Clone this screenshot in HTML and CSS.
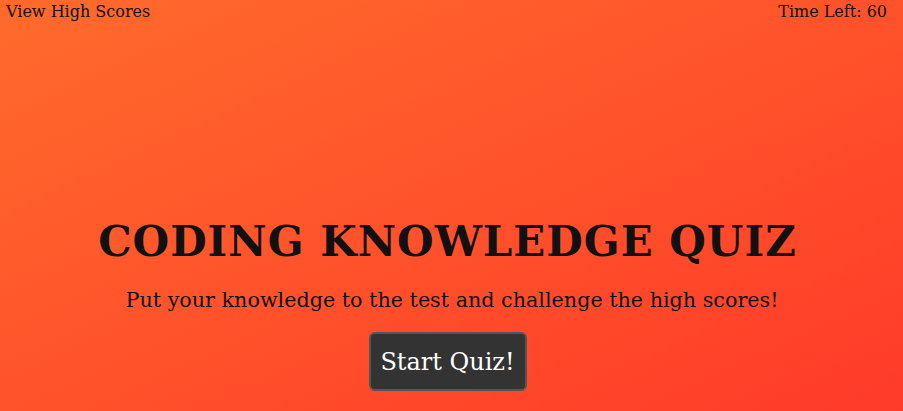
FILE: index.html
```html
<!DOCTYPE html>
<html>
<head>
<meta charset="utf-8">
<link rel="stylesheet" href="styles.css">
</head>
<body>
<header class="top-bar">
  <a class="high-scores">View High Scores</a>
  <span class="timer">Time Left: 60</span>
</header>
<main class="intro">
  <h1 class="title">CODING KNOWLEDGE QUIZ</h1>
  <p class="subtitle">Put your knowledge to the test and challenge the high scores!</p>
  <button class="start-btn">Start Quiz!</button>
</main>
</body>
</html>
```
FILE: styles.css
```css
html, body {
  margin: 0;
  height: 100%;
}
body {
  background: linear-gradient(to bottom right, #ff6b2c, #ff3a29);
  font-family: "DejaVu Serif", serif;
  color: #111;
}
.top-bar {
  display: flex;
  justify-content: space-between;
  padding: 2px 16px 0 6px;
  font-size: 16px;
  line-height: 20px;
}
.intro {
  display: flex;
  flex-direction: column;
  align-items: center;
  padding: 190px 8px 0 0;
}
.title {
  margin: 0;
  font-size: 42px;
  font-weight: bold;
  line-height: 60px;
  letter-spacing: 1px;
}
.subtitle {
  margin: 16px 0 20px;
  padding-left: 9px;
  font-size: 20.7px;
  line-height: 24px;
}
.start-btn {
  font-family: inherit;
  font-size: 24px;
  color: #fff;
  background: #333;
  border: 2px solid #555;
  border-radius: 6px;
  width: 158px;
  height: 59px;
}
```
